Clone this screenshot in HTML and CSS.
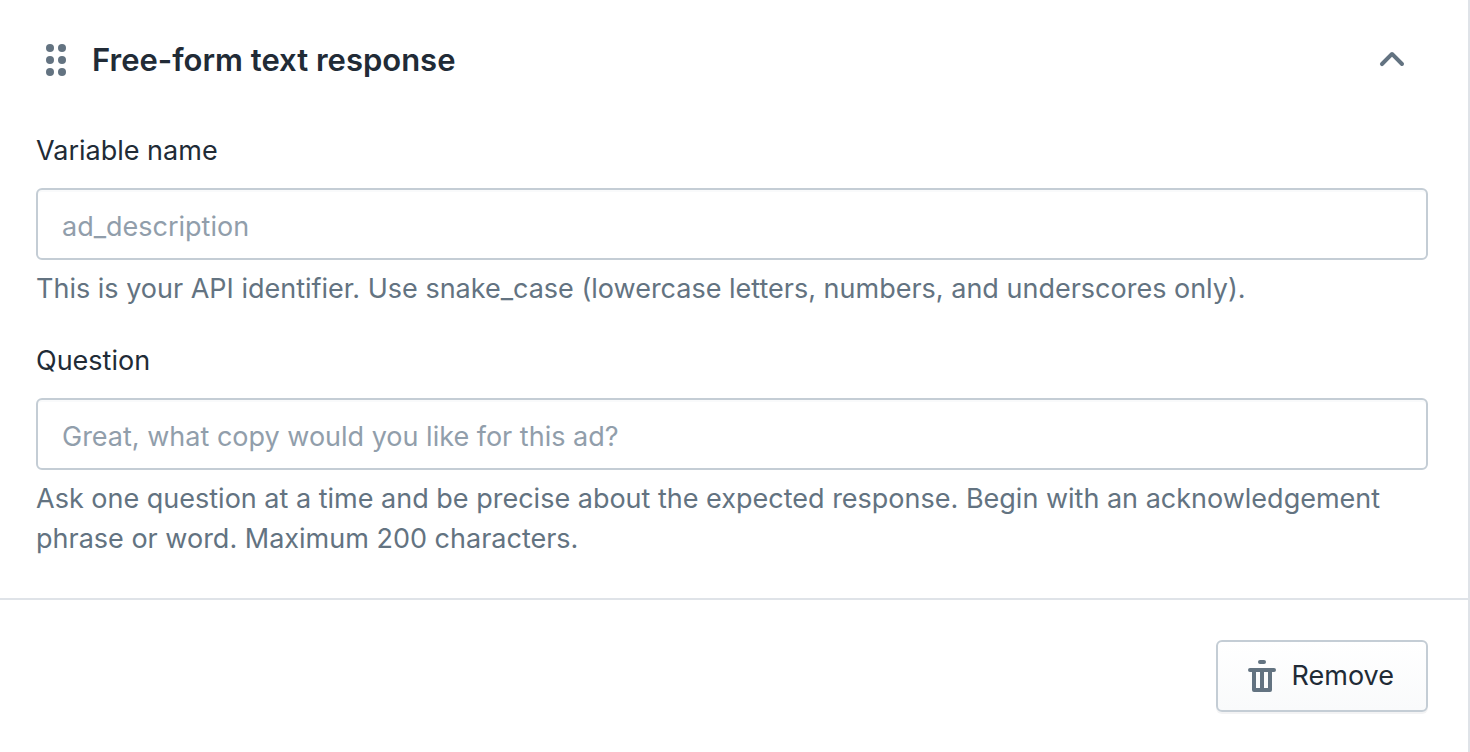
FILE: index.html
```
<!DOCTYPE html>
<html lang="en">
<head>
  <meta charset="UTF-8">
  <meta name="viewport" content="width=device-width, initial-scale=1.0">
  <title>Free-form text response</title>
  <link rel="stylesheet" href="styles.css">
</head>
<body>
  <div class="card">
    <div class="card-body">
      <header class="card-header">
        <svg class="icon" viewBox="0 0 20 20" aria-hidden="true">
          <circle cx="7" cy="4" r="2"/>
          <circle cx="13" cy="4" r="2"/>
          <circle cx="7" cy="10" r="2"/>
          <circle cx="13" cy="10" r="2"/>
          <circle cx="7" cy="16" r="2"/>
          <circle cx="13" cy="16" r="2"/>
        </svg>
        <h2 class="title">Free-form text response</h2>
        <button type="button" class="toggle" aria-label="Collapse">
          <svg class="icon" viewBox="0 0 20 20" aria-hidden="true">
            <path d="M15 13a1 1 0 0 1-.707-.293L10 8.414l-4.293 4.293a1 1 0 1 1-1.414-1.414l5-5a1 1 0 0 1 1.414 0l5 5A1 1 0 0 1 15 13z"/>
          </svg>
        </button>
      </header>

      <div class="field">
        <label for="variable">Variable name</label>
        <input type="text" id="variable" placeholder="ad_description" aria-describedby="variable-help">
        <p class="help" id="variable-help">This is your API identifier. Use snake_case (lowercase letters, numbers, and underscores only).</p>
      </div>

      <div class="field">
        <label for="question">Question</label>
        <input type="text" id="question" placeholder="Great, what copy would you like for this ad?" aria-describedby="question-help">
        <p class="help" id="question-help">Ask one question at a time and be precise about the expected response. Begin with an acknowledgement phrase or word. Maximum 200 characters.</p>
      </div>
    </div>

    <footer class="card-footer">
      <button type="button" class="remove">
        <svg class="icon" viewBox="0 0 20 20" aria-hidden="true">
          <rect x="8" y="2" width="4" height="2" rx="1"/>
          <path fill-rule="evenodd" d="M4 6h12a1 1 0 0 1 0 2h-1v9a1 1 0 0 1-1 1H6a1 1 0 0 1-1-1V8H4a1 1 0 0 1 0-2zM7 8v8h2V8zM11 8v8h2V8z"/>
        </svg>
        Remove
      </button>
    </footer>
  </div>
</body>
</html>
```
FILE: styles.css
```
* {
  box-sizing: border-box;
}
body {
  margin: 0;
  background-color: #fff;
  color: #212b36;
  font-family: Inter, "Liberation Sans", sans-serif;
  font-size: 27px;
  line-height: 40px;
}
.card {
  min-height: 100vh;
  border-right: 2px solid #dfe3e8;
}
.card-body {
  padding: 40px 40px 39px 36px;
}
.card-header {
  display: flex;
  align-items: center;
  padding-right: 16px;
  margin-bottom: 51px;
}
.icon {
  display: block;
  flex: none;
  width: 40px;
  height: 40px;
  fill: #637381;
}
.title {
  flex: 1;
  margin: 0 16px;
  font-size: 31px;
  font-weight: 600;
}
.toggle {
  padding: 0;
  border: none;
  background: none;
  cursor: pointer;
}
.field + .field {
  margin-top: 32px;
}
.field label {
  display: block;
  margin-bottom: 17px;
}
.field input {
  display: block;
  width: 100%;
  height: 72px;
  padding: 4px 24px 0;
  border: 2px solid #c4cdd5;
  border-radius: 6px;
  background-color: #fff;
  box-shadow: inset 0 2px 0 #f9fafb;
  color: #212b36;
  font: inherit;
}
.field input::placeholder {
  color: #919eab;
  opacity: 1;
}
.field input:focus {
  outline: none;
  border-color: #5c6ac4;
}
.help {
  margin: 9px 0 0;
  color: #637381;
}
.card-footer {
  display: flex;
  justify-content: flex-end;
  padding: 40px;
  border-top: 2px solid #dfe3e8;
}
.remove {
  display: flex;
  align-items: center;
  gap: 10px;
  height: 72px;
  padding: 0 32px 0 24px;
  border: 2px solid #c4cdd5;
  border-radius: 6px;
  background: linear-gradient(to bottom, #fff, #f9fafb);
  box-shadow: 0 2px 0 rgba(22, 29, 37, 0.05);
  color: #212b36;
  font: inherit;
  cursor: pointer;
}
```
